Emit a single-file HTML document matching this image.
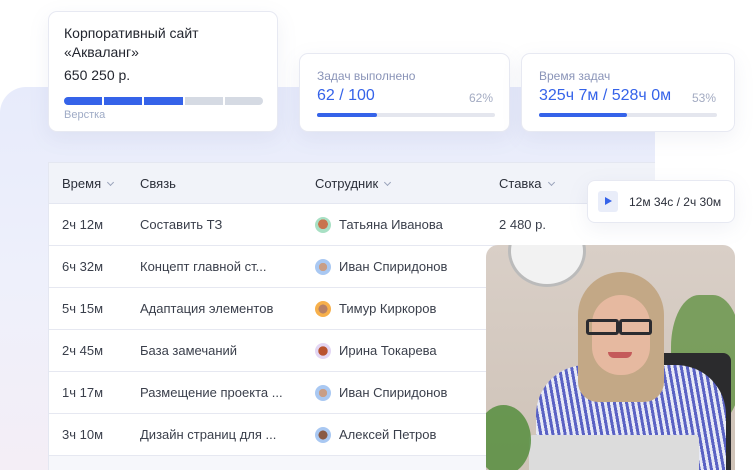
<!DOCTYPE html>
<html><head><meta charset="utf-8"><style>
*{margin:0;padding:0;box-sizing:border-box}
html,body{width:753px;height:470px;overflow:hidden}
body{background:#fff;font-family:"Liberation Sans",sans-serif;position:relative;color:#2b2f3a}
.abs{position:absolute}
.bg{left:0;top:87px;width:655px;height:383px;border-radius:26px 0 0 0;background:linear-gradient(180deg,#e7ebfb 0%,#eef0fb 50%,#f4eef6 100%)}
.card{background:#fff;border-radius:9px;border:1px solid #e7e9f2;box-shadow:0 6px 20px rgba(120,130,170,.10)}
.tbl{left:48px;top:162px;width:607px;height:308px;background:#fff;border-left:1px solid #e4e7f1;border-top:1px solid #e4e7f1;overflow:hidden}
.hdr{position:absolute;left:0;top:0;width:100%;height:41px;background:#f1f3f9;border-bottom:1px solid #e4e7f1}
.row{position:absolute;left:0;width:100%;height:42px;border-bottom:1px solid #e6e8f1;font-size:13px;color:#3a3f4b}
.row span,.hdr span{position:absolute;top:13px;white-space:nowrap}
.hdr span{font-size:13px;color:#2b2f3a;top:13px}
.av{position:absolute;left:266px;top:13px;width:16px;height:16px;border-radius:50%}
.chev{display:inline-block;width:5px;height:5px;border-right:1.5px solid #9aa3bb;border-bottom:1.5px solid #9aa3bb;transform:rotate(45deg);margin-left:7px;position:relative;top:-3px}
</style></head><body>
<div class="abs bg"></div>

<div class="abs card" style="left:48px;top:11px;width:230px;height:121px">
 <div class="abs" style="left:15px;top:12px;font-size:14px;line-height:19px;color:#23262f">Корпоративный сайт<br>«Акваланг»</div>
 <div class="abs" style="left:15px;top:55px;font-size:14px;color:#23262f">650 250 р.</div>
 <div class="abs" style="left:15px;top:85px;width:199px;height:8px;display:flex;gap:2px;border-radius:4px;overflow:hidden">
  <div style="flex:1;background:#3563e9"></div><div style="flex:1;background:#3563e9"></div><div style="flex:1;background:#3563e9"></div><div style="flex:1;background:#d5dae3"></div><div style="flex:1;background:#d5dae3"></div>
 </div>
 <div class="abs" style="left:15px;top:97px;font-size:11px;color:#9fabc6">Верстка</div>
</div>

<div class="abs card" style="left:299px;top:53px;width:211px;height:79px">
 <div class="abs" style="left:17px;top:15px;font-size:12px;color:#8a94b8">Задач выполнено</div>
 <div class="abs" style="left:17px;top:33px;font-size:16px;color:#3563e9">62 / 100</div>
 <div class="abs" style="right:16px;top:37px;font-size:12px;color:#a3abc2">62%</div>
 <div class="abs" style="left:17px;top:59px;width:178px;height:4px;background:#e4e6ee;border-radius:2px"><div style="width:60px;height:4px;background:#3563e9;border-radius:2px"></div></div>
</div>

<div class="abs card" style="left:521px;top:53px;width:214px;height:79px">
 <div class="abs" style="left:17px;top:15px;font-size:12px;color:#8a94b8">Время задач</div>
 <div class="abs" style="left:17px;top:33px;font-size:16px;color:#3563e9">325ч 7м / 528ч 0м</div>
 <div class="abs" style="right:18px;top:37px;font-size:12px;color:#a3abc2">53%</div>
 <div class="abs" style="left:17px;top:59px;width:178px;height:4px;background:#e4e6ee;border-radius:2px"><div style="width:88px;height:4px;background:#3563e9;border-radius:2px"></div></div>
</div>

<div class="abs tbl">
 <div class="hdr"><span style="left:13px">Время<i class="chev"></i></span><span style="left:91px">Связь</span><span style="left:266px">Сотрудник<i class="chev"></i></span><span style="left:450px">Ставка<i class="chev"></i></span></div>
 <div class="row" style="top:41px"><span style="left:13px">2ч 12м</span><span style="left:91px">Составить ТЗ</span><i class="av" style="background:radial-gradient(circle at 50% 45%,#c9744d 40%,#a8e0c4 42%)"></i><span style="left:290px">Татьяна Иванова</span><span style="left:450px">2 480 р.</span></div>
 <div class="row" style="top:83px"><span style="left:13px">6ч 32м</span><span style="left:91px">Концепт главной ст...</span><i class="av" style="background:radial-gradient(circle at 50% 50%,#c99e86 35%,#a9c8f2 38%)"></i><span style="left:290px">Иван Спиридонов</span></div>
 <div class="row" style="top:125px"><span style="left:13px">5ч 15м</span><span style="left:91px">Адаптация элементов</span><i class="av" style="background:radial-gradient(circle at 50% 50%,#b68066 38%,#f7b04b 41%)"></i><span style="left:290px">Тимур Киркоров</span></div>
 <div class="row" style="top:167px"><span style="left:13px">2ч 45м</span><span style="left:91px">База замечаний</span><i class="av" style="background:radial-gradient(circle at 50% 50%,#b9532f 40%,#e3d6f3 43%)"></i><span style="left:290px">Ирина Токарева</span></div>
 <div class="row" style="top:209px"><span style="left:13px">1ч 17м</span><span style="left:91px">Размещение проекта ...</span><i class="av" style="background:radial-gradient(circle at 50% 50%,#c99e86 35%,#a9c8f2 38%)"></i><span style="left:290px">Иван Спиридонов</span></div>
 <div class="row" style="top:251px"><span style="left:13px">3ч 10м</span><span style="left:91px">Дизайн страниц для ...</span><i class="av" style="background:radial-gradient(circle at 50% 50%,#8a5a45 38%,#a9c8f2 41%)"></i><span style="left:290px">Алексей Петров</span></div>
 <div class="row" style="top:293px;background:#f6f7fb;border:none"></div>
</div>

<div class="abs card" style="left:587px;top:180px;width:148px;height:43px;border-radius:8px">
 <div class="abs" style="left:10px;top:10px;width:20px;height:21px;background:#e9edf9;border-radius:3px"></div>
 <div class="abs" style="left:17px;top:16px;width:0;height:0;border-left:7px solid #3563e9;border-top:4.5px solid transparent;border-bottom:4.5px solid transparent"></div>
 <div class="abs" style="left:41px;top:14px;font-size:12px;color:#2b2f3a">12м 34с / 2ч 30м</div>
</div>

<div class="abs" style="left:486px;top:245px;width:249px;height:225px;border-radius:12px 12px 0 0;overflow:hidden;background:linear-gradient(180deg,#d9cfc7,#cfc3b8)">
 <div class="abs" style="left:22px;top:-30px;width:78px;height:72px;border-radius:50%;background:#f2f2f2;border:3px solid #bbb"></div>
 <div class="abs" style="left:185px;top:50px;width:70px;height:130px;border-radius:40%;background:#5b8f3c;opacity:.75"></div>
 <div class="abs" style="left:165px;top:108px;width:80px;height:125px;background:#2b2b2d;border-radius:8px"></div>
 <div class="abs" style="left:50px;top:120px;width:190px;height:120px;border-radius:50px 50px 0 0;background:repeating-linear-gradient(80deg,#5a62c4 0 3px,#e8eaf6 3px 6px)"></div>
 <div class="abs" style="left:92px;top:27px;width:86px;height:130px;border-radius:43px 43px 20px 20px;background:#c3a886"></div>
 <div class="abs" style="left:106px;top:50px;width:58px;height:80px;border-radius:29px 29px 28px 28px;background:#e6b9a0"></div>
 <div class="abs" style="left:100px;top:74px;width:33px;height:16px;border:3px solid #2b2b30;border-radius:3px"></div>
 <div class="abs" style="left:133px;top:74px;width:33px;height:16px;border:3px solid #2b2b30;border-radius:3px"></div>
 <div class="abs" style="left:122px;top:107px;width:24px;height:6px;border-radius:0 0 10px 10px;background:#c45a5a"></div>
 <div class="abs" style="left:43px;top:190px;width:170px;height:45px;background:#dcdcdc;border-radius:4px"></div>
 <div class="abs" style="left:-10px;top:160px;width:55px;height:70px;border-radius:50%;background:#4e8a36;opacity:.8"></div>
</div>
</body></html>
